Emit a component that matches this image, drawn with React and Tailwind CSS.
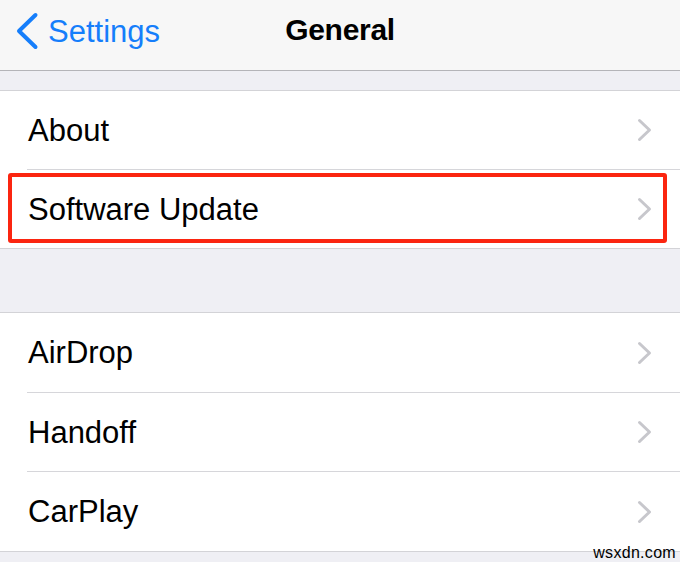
export default function App() {
  const Chevron = () => (
    <svg width="16" height="24" viewBox="0 0 16 24" fill="none" className="shrink-0">
      <path d="M2.5 2.5 L12.5 12 L2.5 21.5" stroke="#c7c7cc" strokeWidth="3" strokeLinecap="round" strokeLinejoin="round" />
    </svg>
  );

  const Row = ({ label, h = 'h-[78px]', children }) => (
    <div className={`relative flex items-center justify-between pl-[28px] pr-[27px] bg-white ${h}`}>
      <span className="text-[31px] text-black leading-none">{label}</span>
      <Chevron />
      {children}
    </div>
  );

  const Sep = () => (
    <div className="bg-white pl-[27px]">
      <div className="h-px bg-[#d6d6da]" />
    </div>
  );

  return (
    <div className="relative w-[680px] h-[562px] overflow-hidden bg-[#efeff4]" style={{ fontFamily: '"Liberation Sans", Arial, sans-serif' }}>
      {/* Nav bar */}
      <div className="relative h-[71px] bg-[#f7f7f7] border-b border-[#b4b4b8] flex items-center pb-[8px]">
        <div className="flex items-center pl-[15px] gap-[9px]">
          <svg width="24" height="38" viewBox="0 0 24 38" fill="none">
            <path d="M20.5 3 L4 19 L20.5 35" stroke="#157efb" strokeWidth="4" strokeLinecap="round" strokeLinejoin="round" />
          </svg>
          <span className="text-[31px] text-[#157efb] leading-none">Settings</span>
        </div>
        <span className="absolute left-1/2 -translate-x-1/2 top-[15px] text-[30px] font-bold text-black leading-none tracking-[-0.3px]">General</span>
      </div>

      <div className="h-[19px]" />

      {/* Group 1 */}
      <div className="border-t border-b border-[#d3d3d7]">
        <Row label="About" />
        <Sep />
        <Row label="Software Update">
          <div className="absolute left-[8px] right-[13px] top-[3px] bottom-[5px] border-[4px] border-[#fb2510] rounded-[3px]" />
        </Row>
      </div>

      <div className="h-[63px]" />

      {/* Group 2 */}
      <div className="border-t border-b border-[#d3d3d7]">
        <Row label="AirDrop" h="h-[79px]" />
        <Sep />
        <Row label="Handoff" h="h-[78px]" />
        <Sep />
        <Row label="CarPlay" h="h-[79px]" />
      </div>

      <span className="absolute right-[4px] bottom-[1px] text-[16px] text-black leading-none tracking-[0.3px]">wsxdn.com</span>
    </div>
  );
}
